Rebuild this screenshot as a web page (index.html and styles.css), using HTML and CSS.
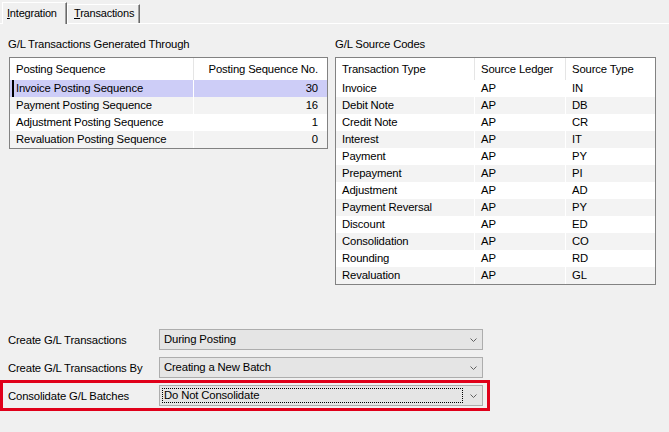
FILE: index.html
```html
<!DOCTYPE html>
<html>
<head>
<meta charset="utf-8">
<link rel="stylesheet" href="styles.css">
</head>
<body>
<div class="tabs">
  <div class="tab active"><u>I</u>ntegration</div>
  <div class="tab"><u>T</u>ransactions</div>
</div>
<div class="panel">
  <div class="groups">
    <section class="group group-left">
      <div class="group-title">G/L Transactions Generated Through</div>
      <table class="grid seq">
        <thead>
          <tr><th class="c1">Posting Sequence</th><th class="c2 num">Posting Sequence No.</th></tr>
        </thead>
        <tbody>
          <tr class="sel"><td class="caret">Invoice Posting Sequence</td><td class="num">30</td></tr>
          <tr class="alt"><td>Payment Posting Sequence</td><td class="num">16</td></tr>
          <tr><td>Adjustment Posting Sequence</td><td class="num">1</td></tr>
          <tr class="alt"><td>Revaluation Posting Sequence</td><td class="num">0</td></tr>
        </tbody>
      </table>
    </section>
    <section class="group group-right">
      <div class="group-title">G/L Source Codes</div>
      <table class="grid codes">
        <thead>
          <tr><th class="d1">Transaction Type</th><th class="d2">Source Ledger</th><th class="d3">Source Type</th></tr>
        </thead>
        <tbody>
          <tr><td>Invoice</td><td>AP</td><td>IN</td></tr>
          <tr class="alt"><td>Debit Note</td><td>AP</td><td>DB</td></tr>
          <tr><td>Credit Note</td><td>AP</td><td>CR</td></tr>
          <tr class="alt"><td>Interest</td><td>AP</td><td>IT</td></tr>
          <tr><td>Payment</td><td>AP</td><td>PY</td></tr>
          <tr class="alt"><td>Prepayment</td><td>AP</td><td>PI</td></tr>
          <tr><td>Adjustment</td><td>AP</td><td>AD</td></tr>
          <tr class="alt"><td>Payment Reversal</td><td>AP</td><td>PY</td></tr>
          <tr><td>Discount</td><td>AP</td><td>ED</td></tr>
          <tr class="alt"><td>Consolidation</td><td>AP</td><td>CO</td></tr>
          <tr><td>Rounding</td><td>AP</td><td>RD</td></tr>
          <tr class="alt"><td>Revaluation</td><td>AP</td><td>GL</td></tr>
        </tbody>
      </table>
    </section>
  </div>
  <div class="form">
    <div class="form-row">
      <span class="form-label">Create G/L Transactions</span>
      <div class="combo"><span class="combo-value">During Posting</span><span class="combo-arrow"><svg width="7" height="4" viewBox="0 0 7 4"><path d="M0.5 0.5 L3.5 3.5 L6.5 0.5" fill="none" stroke="#606060" stroke-width="1"/></svg></span></div>
    </div>
    <div class="form-row">
      <span class="form-label">Create G/L Transactions By</span>
      <div class="combo"><span class="combo-value">Creating a New Batch</span><span class="combo-arrow"><svg width="7" height="4" viewBox="0 0 7 4"><path d="M0.5 0.5 L3.5 3.5 L6.5 0.5" fill="none" stroke="#606060" stroke-width="1"/></svg></span></div>
    </div>
    <div class="form-row highlight">
      <span class="form-label">Consolidate G/L Batches</span>
      <div class="combo"><span class="combo-value focused">Do Not Consolidate</span><span class="combo-arrow"><svg width="7" height="4" viewBox="0 0 7 4"><path d="M0.5 0.5 L3.5 3.5 L6.5 0.5" fill="none" stroke="#606060" stroke-width="1"/></svg></span></div>
    </div>
  </div>
</div>
</body>
</html>
```

FILE: styles.css
```css
html, body {
  margin: 0;
  padding: 0;
}
body {
  width: 669px;
  height: 432px;
  overflow: hidden;
  background: #f0f0f0;
  font-family: "Liberation Sans", Arial, sans-serif;
  font-size: 11.3px;
  letter-spacing: -0.15px;
  color: #000;
}

/* Tabs */
.tabs {
  display: flex;
  align-items: flex-end;
  height: 24px;
  box-sizing: border-box;
  padding-left: 2px;
  border-bottom: 1px solid #ffffff;
}
.tab {
  box-sizing: border-box;
  height: 19px;
  padding: 0 3px 0 4px;
  font-size: 11px;
  letter-spacing: -0.2px;
  line-height: 17px;
  border-left: 1px solid #ffffff;
  border-top: 1px solid #ffffff;
  border-right: 1px solid #696969;
  box-shadow: inset -1px 0 0 #a0a0a0;
  background: #f0f0f0;
}
.tab.active {
  height: 22px;
  margin-bottom: -1px;
  width: 65px;
  padding-left: 4px;
  line-height: 20px;
  position: relative;
  z-index: 1;
}
.tab:not(.active) {
  width: 73px;
  padding-left: 6px;
}

/* Groups */
.groups {
  display: flex;
  padding: 13px 0 0 8px;
  gap: 7px;
  align-items: flex-start;
}
.group-title {
  height: 14px;
  line-height: 14px;
  margin-bottom: 6px;
}
.group-left .grid {
  margin-left: 1px;
  width: 319px;
}
.group-right .grid {
  width: 321px;
}

.grid {
  border-collapse: separate;
  border-spacing: 0;
  border: 1px solid #828282;
  background: #ffffff;
  table-layout: fixed;
}
.grid th {
  box-sizing: content-box;
  height: 21px;
  padding: 1px 6px 0;
  line-height: 21px;
  font-weight: normal;
  text-align: left;
  border-right: 1px solid #e5e5e5;
  white-space: nowrap;
}
.grid th:last-child {
  border-right: none;
}
.grid td {
  box-sizing: content-box;
  height: 17px;
  padding: 0 6px;
  line-height: 17px;
  white-space: nowrap;
  border-right: 1px solid #ffffff;
}
.grid td:last-child {
  border-right: none;
}
.grid .num {
  text-align: right;
  padding-right: 9px;
}
.grid tr.alt td {
  background: #f3f3f3;
}
.grid tr.sel td {
  background: #cdcdf7;
}
.grid td.caret {
  position: relative;
}
.grid td.caret::before {
  content: "";
  position: absolute;
  left: 2px;
  top: 0;
  width: 2px;
  height: 17px;
  background: #000;
}

.seq .c1 { width: 171px; }
.seq .c2 { width: 118px; }
.codes .d1 { width: 126px; }
.codes .d2 { width: 78px; }
.codes .d3 { width: 77px; }

/* Form */
.form {
  display: flex;
  flex-direction: column;
  gap: 7px;
  margin-top: 44px;
  margin-left: 5px;
  width: 480px;
}
.form-row {
  display: flex;
  align-items: center;
  height: 21px;
  padding: 0 2px 0 3px;
}
.form-row.highlight {
  outline: 3px solid #e0001a;
  outline-offset: 2px;
}
.form-label {
  flex: 1;
}
.combo {
  display: flex;
  align-items: center;
  box-sizing: border-box;
  width: 324px;
  height: 21px;
  border: 1px solid #adadad;
  background: #e5e5e5;
}
.combo-value {
  flex: 1;
  box-sizing: border-box;
  height: 15px;
  line-height: 13px;
  margin: 0 1px 0 2px;
  padding: 0 1px;
  border: 1px dotted transparent;
  white-space: nowrap;
}
.combo-value.focused {
  border-color: #000;
}
.combo-arrow {
  width: 18px;
  display: flex;
  justify-content: center;
  align-items: center;
}
.combo-arrow svg {
  display: block;
}
```
